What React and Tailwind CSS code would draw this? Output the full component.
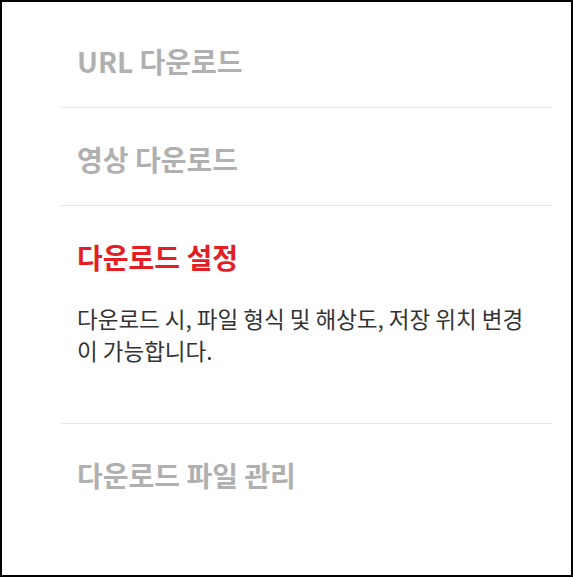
import React from "react";

const font = { fontFamily: '"Noto Sans CJK KR", "Noto Sans", sans-serif' };

function Item({ title, active, children, last }) {
  return (
    <div className={last ? "px-4 pt-[33px] pb-[28px]" : "border-b border-[#e5e5e5] px-4 pt-[33px] pb-[28px]"}>
      <h3
        className={
          "text-[28px] leading-[36px] font-bold " +
          (active ? "text-[#e31e24]" : "text-[#b0b0b0]")
        }
      >
        {title}
      </h3>
      {children}
    </div>
  );
}

export default function App() {
  return (
    <div className="h-[577px] w-[573px] border-2 border-black bg-white" style={font}>
      <div className="ml-[59px] w-[491px] pt-[8px]">
        <Item title="URL 다운로드" />
        <Item title="영상 다운로드" />
        <Item title="다운로드 설정" active>
          <p className="mt-[27px] mb-[29px] break-all text-[22.5px] leading-[32px] text-[#333333]">
            다운로드 시, 파일 형식 및 해상도, 저장 위치 변경이 가능합니다.
          </p>
        </Item>
        <Item title="다운로드 파일 관리" last />
      </div>
    </div>
  );
}
